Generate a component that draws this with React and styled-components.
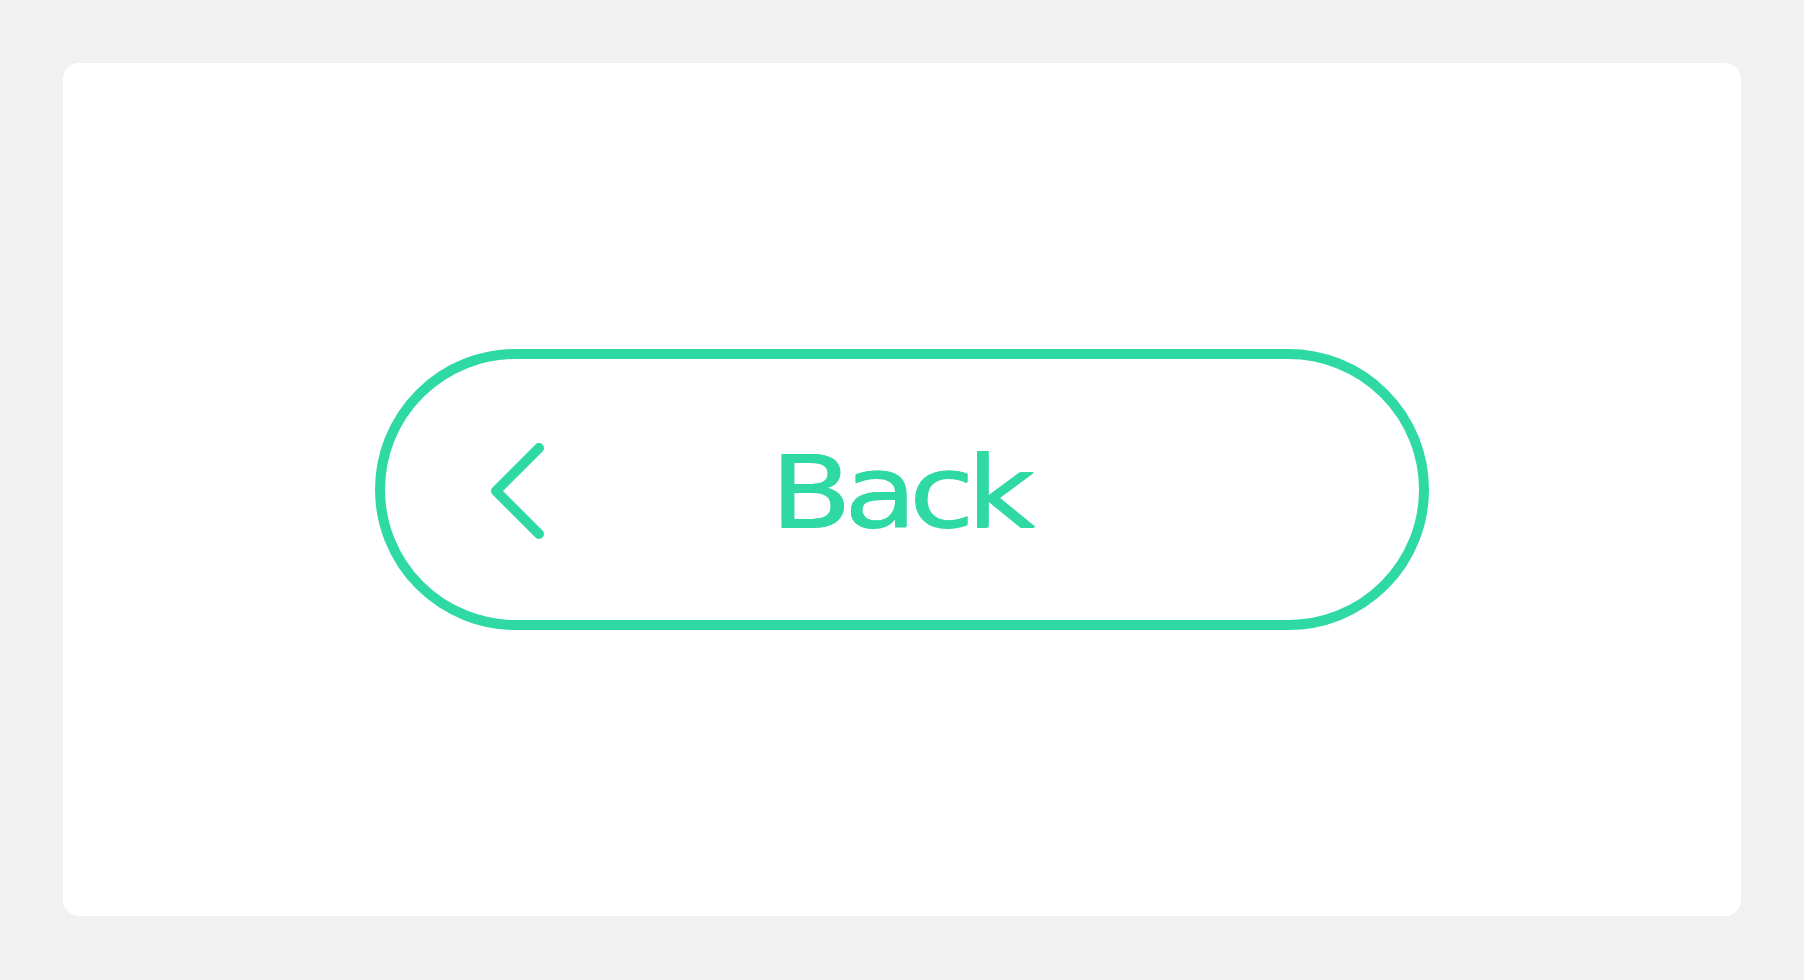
import React from "react";
import styled, { createGlobalStyle } from "styled-components";

const GREEN = "#2fd9a3";

const GlobalStyle = createGlobalStyle`
  html, body {
    margin: 0;
    padding: 0;
    background: #f1f1f1;
  }
  body {
    font-family: "DejaVu Sans", Inter, sans-serif;
  }
`;

const Page = styled.div`
  width: 1804px;
  height: 980px;
  box-sizing: border-box;
  padding: 63px 63px 64px 63px;
  display: flex;
`;

const Card = styled.main`
  flex: 1;
  background: #ffffff;
  border-radius: 16px;
  display: flex;
  align-items: center;
  justify-content: center;
`;

const BackButton = styled.button`
  box-sizing: border-box;
  width: 1054px;
  height: 281px;
  border: 10px solid ${GREEN};
  border-radius: 141px;
  background: #ffffff;
  color: ${GREEN};
  padding: 0 0 0 106px;
  display: flex;
  align-items: center;
  cursor: pointer;
  font-family: "DejaVu Sans", Inter, sans-serif;
`;

const Chevron = styled.svg`
  flex: none;
  width: 54px;
  height: 98px;
  margin-top: 2px;
`;

/* Wide geometric look: the face is stretched horizontally, tracked in,
   and thickened a little with crisp offset shadows */
const Label = styled.span`
  display: inline-block;
  font-size: 99px;
  font-weight: 400;
  letter-spacing: ${(p) => p.$tracking}px;
  line-height: 1;
  margin-left: ${(p) => p.$gap}px;
  margin-top: 6px;
  text-shadow: 0.8px 0 0 ${GREEN}, 0 0.8px 0 ${GREEN};
  transform: scaleX(${(p) => p.$stretch});
  transform-origin: left center;
`;

export default function App() {
  return (
    <>
      <GlobalStyle />
      <Page>
        <Card>
          <BackButton type="button">
            <Chevron viewBox="0 0 54 98" fill="none" aria-hidden="true">
              <path
                d="M48 6 L5 49 L48 92"
                stroke={GREEN}
                strokeWidth="10"
                strokeLinecap="round"
                strokeLinejoin="round"
              />
            </Chevron>
            <Label $tracking={-6.5} $gap={225} $stretch={1.2}>Back</Label>
          </BackButton>
        </Card>
      </Page>
    </>
  );
}
